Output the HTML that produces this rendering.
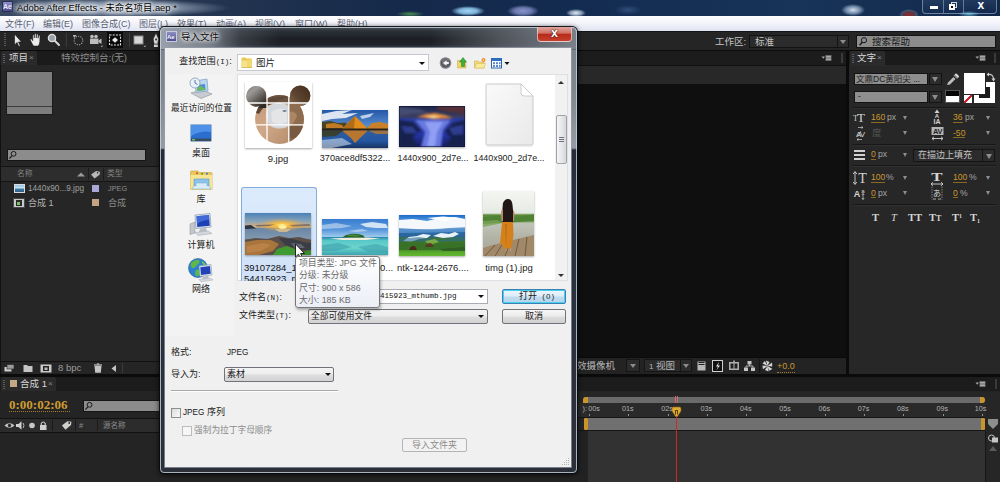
<!DOCTYPE html>
<html lang="zh-CN">
<head>
<meta charset="utf-8">
<title>Adobe After Effects - 导入文件</title>
<style>
html,body{margin:0;padding:0;}
body{width:1000px;height:482px;overflow:hidden;position:relative;background:#232323;
 font-family:"Liberation Sans","Noto Sans CJK SC",sans-serif;font-size:9px;color:#c0c0c0;}
.a{position:absolute;}
.t{position:absolute;white-space:nowrap;line-height:1;}
/* ---------- AE main window ---------- */
#titlebar{left:0;top:0;width:1000px;height:16px;background:
 radial-gradient(ellipse 17px 5px at 468px 11px,rgba(170,222,252,.95) 0,rgba(150,210,250,.8) 55%,rgba(120,190,245,0) 100%),
 radial-gradient(ellipse 16px 6px at 523px 11px,rgba(150,160,215,.9) 0,rgba(140,150,210,.7) 55%,rgba(110,130,200,0) 100%),
 radial-gradient(ellipse 10px 4px at 576px 13px,rgba(240,246,252,.95) 0,rgba(200,220,240,.6) 60%,rgba(150,190,235,0) 100%),
 radial-gradient(ellipse 14px 5px at 628px 10px,rgba(70,100,150,.6),rgba(70,100,150,0) 100%),
 radial-gradient(ellipse 12px 6px at 853px 10px,rgba(235,242,250,.9) 0,rgba(170,195,225,.6) 60%,rgba(120,150,190,0) 100%),
 radial-gradient(ellipse 10px 6px at 909px 15px,rgba(150,40,40,.95) 0,rgba(120,60,60,.7) 55%,rgba(120,130,150,.45) 75%,rgba(110,60,60,0) 100%),
 radial-gradient(ellipse 14px 3px at 410px 14px,rgba(90,170,80,.8),rgba(60,120,80,0) 100%),
 radial-gradient(ellipse 120px 9px at 110px 8px,rgba(225,232,242,.85) 0,rgba(190,205,225,.5) 60%,rgba(190,205,225,0) 100%),
 linear-gradient(90deg,#3a4a62 0,#22344f 22%,#15294a 40%,#142c52 60%,#183458 80%,#12284a 100%);}
#menubar{left:0;top:16px;width:1000px;height:15px;background:linear-gradient(180deg,#fefefe 0,#f4f5fb 45%,#e0e3f1 100%);}
#menubar .t{top:4px;font-size:9px;color:#586072;}
#toolbar{left:0;top:31px;width:1000px;height:19px;background:#252525;border-top:1px solid #151515;box-sizing:border-box;}
.blk{background:#0b0b0b;}

/* ---------- dialog ---------- */
#dlg{left:160px;top:27px;width:417px;height:446px;border-radius:5px 5px 4px 4px;
 background:
 linear-gradient(90deg,rgba(160,168,178,.95) 0,rgba(140,148,158,.8) 50px,rgba(90,98,108,.45) 80px,rgba(30,34,40,0) 120px,rgba(20,24,30,0) 270px,rgba(100,106,114,.7) 340px,rgba(128,134,142,.95) 100%) 0 0/100% 22px no-repeat,
 linear-gradient(180deg,#4a525c 0,#2c3138 4px,#1c1f25 12px,#202329 18px,#4a5058 22px,#7e848c 23px,#80868e 60px,#959ba3 121px,#252b38 123px,#2a3040 170px,#2b3038 100%);
 box-shadow:0 0 0 1px rgba(8,10,12,.9),0 1px 5px 1px rgba(0,0,0,.7);}
#dlg:before{content:"";position:absolute;left:0;top:0;right:0;bottom:0;border:1px solid rgba(200,212,224,.8);border-radius:5px 5px 4px 4px;}
#dbody{left:165px;top:48px;width:406px;height:419px;background:#f0f0f0;box-shadow:0 0 0 1px rgba(150,160,172,.7);}
.d{color:#1a1a1a;font-size:9.5px;}
.lbl{position:absolute;white-space:nowrap;line-height:1;font-size:9.5px;color:#222;text-align:center;}
.thumb{position:absolute;overflow:hidden;box-shadow:0 1px 2px rgba(0,0,0,.35);}
</style>
</head>
<body>
<!-- title bar -->
<div id="titlebar" class="a"></div>
<div class="a" style="left:2px;top:1px;width:11px;height:11px;background:linear-gradient(180deg,#8f90c8,#4c4d86);border:1px solid #2b2c5a;box-sizing:border-box;"></div>
<div class="t" style="left:3px;top:3px;font-size:7px;font-weight:bold;color:#e8e8ff;">Ae</div>
<div class="t" style="left:17px;top:3px;font-size:9.4px;color:#000;text-shadow:0 0 3px #fff,0 0 5px #fff,0 0 8px #fff,0 0 10px rgba(255,255,255,.9);">Adobe After Effects - 未命名项目.aep *</div>
<!-- window controls -->
<div class="a" style="left:922px;top:0;width:75px;height:14px;border:1px solid rgba(170,190,215,.55);border-top:none;border-radius:0 0 4px 4px;box-sizing:border-box;background:linear-gradient(180deg,rgba(60,90,130,.35),rgba(20,45,85,.25));"></div>
<div class="a" style="left:943px;top:0;width:1px;height:13px;background:rgba(170,190,215,.5);"></div>
<div class="a" style="left:963px;top:0;width:1px;height:13px;background:rgba(170,190,215,.5);"></div>
<div class="a" style="left:958px;top:11px;width:22px;height:5px;background:radial-gradient(ellipse 11px 3px at 50% 60%,rgba(130,220,250,.75),rgba(130,220,250,0));"></div>
<div class="a" style="left:930px;top:6px;width:8px;height:3px;background:#fff;"></div>
<div class="a" style="left:951px;top:2px;width:6px;height:6px;border:1.500px solid #d8d8d8;box-sizing:border-box;"></div>
<div class="a" style="left:949px;top:4px;width:6px;height:6px;border:2px solid #fff;box-sizing:border-box;background:#111;"></div>
<div class="t" style="left:977.500px;top:-1px;font-size:12px;font-weight:bold;color:#fff;">x</div>

<!-- menu bar -->
<div id="menubar" class="a">
 <div class="t" style="left:5px;">文件(F)</div>
 <div class="t" style="left:43px;">编辑(E)</div>
 <div class="t" style="left:82px;">图像合成(C)</div>
 <div class="t" style="left:139px;">图层(L)</div>
 <div class="t" style="left:177px;">效果(T)</div>
 <div class="t" style="left:216px;">动画(A)</div>
 <div class="t" style="left:255px;">视图(V)</div>
 <div class="t" style="left:295px;">窗口(W)</div>
 <div class="t" style="left:337px;">帮助(H)</div>
</div>

<!-- toolbar -->
<div id="toolbar" class="a"></div>


<!-- toolbar icons -->
<div class="a" style="left:4px;top:33px;width:2px;height:14px;background:repeating-linear-gradient(180deg,#555 0 1px,#252525 1px 2px);"></div>
<svg class="a" style="left:0;top:30px;" width="170" height="20" viewBox="0 0 170 20">
 <!-- arrow -->
 <path d="M14.5 4 L14.5 15 L17 12.5 L18.8 16.5 L20.3 15.8 L18.5 12 L21.5 12 Z" fill="#e6e6e6" stroke="#111" stroke-width=".6"/>
 <!-- hand -->
 <path d="M30 9.300 L31.300 8.800 L32.800 10.800 L32.800 5.300 Q33.500 4.400 34.200 5.300 L34.300 8 L34.600 4 Q35.400 3.100 36.100 4 L36.200 8 L36.700 4.300 Q37.500 3.500 38.100 4.400 L38 8.300 L38.700 5.600 Q39.500 5 40 5.900 L39.800 11.500 Q39.600 14 38.300 16 L33.600 16 Q31.500 13 30 9.300 Z" fill="#ececec" stroke="#161616" stroke-width=".5"/>
 <!-- zoom -->
 <circle cx="52" cy="8" r="3.6" fill="#9aa0a8" stroke="#e0e0e0" stroke-width="1.4"/>
 <path d="M54.8 10.8 L59 15" stroke="#d8d8d8" stroke-width="2" stroke-linecap="round"/>
 <!-- sep -->
 <rect x="66" y="3" width="1" height="14" fill="#3a3a3a"/>
 <!-- rotate -->
 <circle cx="78.500" cy="10.500" r="4.300" fill="none" stroke="#9a9a9a" stroke-width="1.100" stroke-dasharray="1.300 1.100"/>
 <path d="M73 5 L76.5 5 L74 8 Z" fill="#bdbdbd"/>
 <!-- camera -->
 <rect x="90" y="8.5" width="8.5" height="5.5" fill="#bdbdbd"/>
 <circle cx="92" cy="6.5" r="1.8" fill="#bdbdbd"/><circle cx="96" cy="6.5" r="1.8" fill="#bdbdbd"/>
 <path d="M98.5 10.5 L101.5 8.5 L101.5 14 L98.5 12 Z" fill="#bdbdbd"/>
 <path d="M100.5 17 L102.5 17 L102.5 15 Z" fill="#aaa"/>
 <!-- pan behind (selected) -->
 <rect x="107" y="2" width="16" height="16" fill="#0a0a0a"/>
 <rect x="109.5" y="5" width="11" height="10" fill="none" stroke="#e8e8e8" stroke-width="1.1" stroke-dasharray="2 1.2"/>
 <path d="M112 10 L115 7.2 L118 10 L115 12.8 Z" fill="#e8e8e8"/>
 <!-- sep -->
 <rect x="129" y="3" width="1" height="14" fill="#3a3a3a"/>
 <!-- rect -->
 <rect x="134" y="6" width="9" height="8" fill="#d6d6d6" stroke="#8a8a8a" stroke-width="1"/>
 <path d="M143.5 17 L145.5 17 L145.5 15 Z" fill="#aaa"/>
 <!-- pen -->
 <path d="M156 3 L158.8 9 L157.8 14 L154.2 14 L153.2 9 Z" fill="#e6e6e6" stroke="#111" stroke-width=".5"/>
 <rect x="154" y="14.5" width="4" height="2.5" fill="#e0e0e0"/>
 <circle cx="156" cy="9.5" r=".9" fill="#222"/>
</svg>
<div class="a blk" style="left:0;top:50px;width:1000px;height:1px;"></div>


<!-- workspace + search help -->
<div class="t" style="left:715px;top:37px;font-size:9.500px;color:#c4c4c4;">工作区:</div>
<div class="a" style="left:749px;top:35px;width:100px;height:13px;background:#2b2b2b;border:1px solid #131313;box-sizing:border-box;"></div>
<div class="a" style="left:837px;top:36px;width:1px;height:11px;background:#131313;"></div>
<div class="t" style="left:755px;top:37px;font-size:9.500px;color:#c4c4c4;">标准</div>
<div class="a" style="left:840px;top:40px;width:0;height:0;border-left:3px solid transparent;border-right:3px solid transparent;border-top:4px solid #8c8c8c;"></div>
<div class="a" style="left:856px;top:35px;width:140px;height:13px;background:#8c8c8c;border:1px solid #131313;box-sizing:border-box;"></div>
<svg class="a" style="left:858px;top:36px;" width="12" height="11" viewBox="0 0 12 11"><circle cx="6" cy="4.200" r="2.600" fill="none" stroke="#161616" stroke-width="1"/><path d="M4.200 6.200 L1.600 9.200" stroke="#161616" stroke-width="1.300"/></svg>
<div class="t" style="left:872px;top:37px;font-size:9.500px;color:#161616;">搜索帮助</div>

<!-- ===== project panel (left) ===== -->
<div class="a" style="left:0;top:51px;width:163px;height:14px;background:#1b1b1b;"></div>
<div class="a" style="left:1px;top:51px;width:36px;height:15px;background:#2a2a2a;border-radius:2px 2px 0 0;"></div>
<div class="a" style="left:3px;top:54px;width:2px;height:9px;background:repeating-linear-gradient(180deg,#5a5a5a 0 1px,#2a2a2a 1px 2px);"></div>
<div class="t" style="left:9px;top:53px;font-size:9.5px;color:#d6d6d6;">项目</div>
<div class="t" style="left:29px;top:54px;font-size:8px;color:#8a8a8a;">×</div>
<div class="t" style="left:61px;top:53px;font-size:9.5px;color:#8c8c8c;">特效控制台:(无)</div>
<div class="a" style="left:0;top:65px;width:163px;height:296px;background:#262626;"></div>
<div class="a" style="left:0;top:65px;width:1px;height:310px;background:#111;"></div>
<!-- thumbnail -->
<div class="a" style="left:6px;top:71px;width:47px;height:44px;background:#7d7d7d;border:1px solid #1a1a1a;box-sizing:border-box;"></div>
<div class="a" style="left:7px;top:106px;width:45px;height:1px;background:#3c3c3c;"></div>
<!-- search -->
<div class="a" style="left:7px;top:149px;width:139px;height:12px;background:#8c8c8c;border:1px solid #161616;box-sizing:border-box;"></div>
<svg class="a" style="left:8px;top:150px;" width="12" height="10" viewBox="0 0 12 10"><circle cx="5.6" cy="3.8" r="2.4" fill="none" stroke="#1a1a1a" stroke-width="1"/><path d="M3.8 5.8 L1.4 8.6" stroke="#1a1a1a" stroke-width="1.2"/></svg>
<!-- header -->
<div class="a" style="left:1px;top:166px;width:162px;height:1px;background:#141414;"></div>
<div class="a" style="left:1px;top:167px;width:162px;height:14px;background:#2d2d2d;"></div>
<div class="a" style="left:1px;top:181px;width:162px;height:1px;background:#141414;"></div>
<div class="t" style="left:17px;top:170px;font-size:7.800px;color:#828282;">名称</div>
<svg class="a" style="left:76px;top:170px;" width="30" height="10" viewBox="0 0 30 10"><path d="M1 6.5 L5 2.5 L9 6.5 Z" fill="#9a9a9a"/><path d="M15 5 L19.5 1 L23.5 1 L23.5 4 L19 8.5 Z" fill="#b8b8b8" transform="rotate(8 19 5)"/><circle cx="21.6" cy="2.8" r=".8" fill="#2d2d2d"/></svg>
<div class="t" style="left:107px;top:170px;font-size:7.800px;color:#828282;">类型</div><div class="a" style="left:88px;top:168px;width:1px;height:12px;background:#1c1c1c;"></div><div class="a" style="left:103px;top:168px;width:1px;height:12px;background:#1c1c1c;"></div>
<!-- rows -->
<div class="a" style="left:14px;top:184px;width:11px;height:9px;background:linear-gradient(180deg,#8fc3e6 0,#cfe6f4 45%,#3f7fa8 55%,#2d5f86 100%);border:1px solid #dcdcdc;box-sizing:border-box;"></div>
<div class="t" style="left:28px;top:185px;font-size:8.200px;color:#a0a0a0;">1440x90...9.jpg</div>
<div class="a" style="left:92px;top:185px;width:7px;height:7px;background:#aaa8d8;"></div>
<div class="t" style="left:108px;top:185px;font-size:7.300px;color:#8e8e8e;">JPEG</div>
<div class="a" style="left:13px;top:198px;width:12px;height:10px;background:#c9c9c9;border:1px solid #4a4a4a;box-sizing:border-box;"></div>
<div class="a" style="left:16px;top:200px;width:6px;height:6px;background:#2a2a2a;"></div>
<div class="a" style="left:17px;top:202px;width:3px;height:3px;background:#7cc06a;"></div>
<div class="t" style="left:28px;top:198.500px;font-size:9px;color:#b2b2b2;">合成 1</div>
<div class="a" style="left:92px;top:199px;width:7px;height:7px;background:#c4a484;"></div>
<div class="t" style="left:108px;top:198.500px;font-size:9px;color:#8a8a8a;">合成</div>
<!-- bottom bar -->
<div class="a" style="left:0;top:361px;width:163px;height:1px;background:#111;"></div>
<div class="a" style="left:1px;top:362px;width:162px;height:12px;background:#252525;"></div>
<svg class="a" style="left:0;top:362px;" width="130" height="12" viewBox="0 0 130 12">
 <rect x="4.5" y="5" width="7" height="4.5" fill="#cfcfcf"/><rect x="7" y="2.5" width="7" height="4.5" fill="#9a9a9a" stroke="#252525" stroke-width=".6"/>
 <path d="M23.5 3 L27 3 L28 4 L32.5 4 L32.5 10 L23.5 10 Z" fill="#c4c4c4"/>
 <rect x="40.5" y="2.5" width="11" height="8" fill="#c9c9c9"/><rect x="43" y="4" width="6" height="5" fill="#252525"/><rect x="44.5" y="5.5" width="3" height="2.5" fill="#bdbdbd"/>
 <path d="M94.5 4 L101.5 4 L100.8 10.8 L95.2 10.8 Z" fill="#c4c4c4"/><rect x="94" y="2.4" width="8" height="1.2" fill="#c4c4c4"/><rect x="96.8" y="1.4" width="2.4" height="1.2" fill="#c4c4c4"/>
 <path d="M116 3 L116 10 L111.5 6.5 Z" fill="#c4c4c4"/>
 <rect x="122" y="1" width="1" height="10" fill="#3a3a3a"/>
</svg>
<div class="t" style="left:58px;top:363px;font-size:9.5px;color:#9c9c9c;">8 bpc</div>
<div class="a blk" style="left:0;top:374px;width:1000px;height:3px;"></div>


<!-- ===== timeline (left) ===== -->
<div class="a" style="left:0;top:377px;width:1000px;height:14px;background:#1c1c1c;"></div>
<div class="a" style="left:1px;top:377px;width:55px;height:15px;background:#2a2a2a;border-radius:2px 2px 0 0;"></div>
<div class="a" style="left:3px;top:380px;width:2px;height:9px;background:repeating-linear-gradient(180deg,#5a5a5a 0 1px,#2a2a2a 1px 2px);"></div>
<div class="a" style="left:10px;top:380px;width:7px;height:7px;background:#c4a987;"></div>
<div class="t" style="left:20px;top:379px;font-size:9.5px;color:#d6d6d6;">合成 1</div>
<div class="t" style="left:48px;top:380px;font-size:8px;color:#8a8a8a;">×</div>
<div class="a" style="left:0;top:391px;width:1000px;height:91px;background:#242424;"></div>
<div class="t" style="left:9px;top:398px;font-size:13px;font-weight:bold;color:#cf9c30;letter-spacing:0;font-family:'Liberation Serif','Noto Serif CJK SC',serif;">0:00:02:06</div>
<div class="a" style="left:9px;top:411px;width:61px;height:0;border-top:1px dotted #a57c26;"></div>
<div class="a" style="left:83px;top:400px;width:80px;height:12px;background:#8c8c8c;border:1px solid #161616;box-sizing:border-box;"></div>
<svg class="a" style="left:84px;top:401px;" width="12" height="10" viewBox="0 0 12 10"><circle cx="5.6" cy="3.8" r="2.4" fill="none" stroke="#1a1a1a" stroke-width="1"/><path d="M3.8 5.8 L1.4 8.6" stroke="#1a1a1a" stroke-width="1.2"/></svg>
<div class="a" style="left:0;top:418px;width:163px;height:1px;background:#121212;"></div>
<div class="a" style="left:0;top:419px;width:163px;height:13px;background:#2c2c2c;"></div>
<div class="a" style="left:0;top:432px;width:163px;height:1px;background:#121212;"></div>
<svg class="a" style="left:0;top:419px;" width="140" height="13" viewBox="0 0 140 13">
 <path d="M4.5 6.5 Q9.5 2 14.5 6.5 Q9.5 11 4.5 6.5 Z" fill="#c8c8c8"/><circle cx="9.5" cy="6.5" r="1.7" fill="#2c2c2c"/>
 <path d="M16 5 L18.5 5 L21.5 2.2 L21.5 10.8 L18.5 8 L16 8 Z" fill="#d0d0d0"/><path d="M23 4 Q25 6.5 23 9" fill="none" stroke="#c8c8c8" stroke-width=".9"/>
 <circle cx="32" cy="6.5" r="2.8" fill="#c8c8c8"/>
 <rect x="40" y="6" width="6.5" height="5" fill="#d0d0d0"/><path d="M41.3 6 L41.3 4.3 Q43.2 1.6 45.2 4.3 L45.2 6" fill="none" stroke="#d0d0d0" stroke-width="1.1"/>
 <rect x="52" y="1" width="1" height="11" fill="#1a1a1a"/>
 <path d="M62 7 L67 2.2 L71 2.2 L71 5.6 L66 10.8 Z" fill="#cfcfcf" transform="rotate(6 66 6)"/><circle cx="69.2" cy="4" r=".9" fill="#2c2c2c"/>
 <rect x="75" y="1" width="1" height="11" fill="#1a1a1a"/>
 <rect x="97" y="1" width="1" height="11" fill="#1a1a1a"/>
</svg>
<div class="t" style="left:79px;top:422px;font-size:7.5px;color:#8c8c8c;">#</div>
<div class="t" style="left:103px;top:422px;font-size:7.5px;color:#8c8c8c;">源名称</div>


<!-- ===== comp panel (center) ===== -->
<div class="a" style="left:163px;top:51px;width:683px;height:14px;background:#1c1c1c;"></div>
<div class="a" style="left:163px;top:65px;width:683px;height:1px;background:#101010;"></div>
<div class="a" style="left:163px;top:66px;width:683px;height:18px;background:#282828;"></div>
<div class="a" style="left:163px;top:84px;width:683px;height:273px;background:#0f0f0f;"></div>
<div class="a" style="left:163px;top:357px;width:683px;height:1px;background:#0a0a0a;"></div>
<div class="a" style="left:163px;top:358px;width:683px;height:16px;background:#232323;"></div>
<div class="a blk" style="left:846px;top:51px;width:3px;height:326px;"></div>
<svg class="a" style="left:818px;top:53px;" width="28" height="10" viewBox="0 0 28 10"><path d="M3.5 3.5 L7 3.5 L5.25 5.8 Z" fill="#a8a8a8"/><rect x="7.5" y="2" width="6" height="6" fill="#6a6a6a"/><path d="M8 3.5h5M8 5h5M8 6.5h5" stroke="#b8b8b8" stroke-width=".8"/><rect x="23" y="0" width="2" height="10" fill="#3a3a3a"/></svg>
<!-- comp bottom controls -->
<div class="t" style="left:577px;top:361px;font-size:9.5px;color:#b8b8b8;">效摄像机</div>
<div class="a" style="left:626px;top:359px;width:14px;height:13px;border:1px solid #151515;box-sizing:border-box;background:#2b2b2b;"></div>
<div class="a" style="left:630px;top:364px;width:0;height:0;border:3px solid transparent;border-top:4px solid #8a8a8a;"></div>
<div class="a" style="left:644px;top:359px;width:48px;height:13px;border:1px solid #151515;box-sizing:border-box;background:#2b2b2b;"></div>
<div class="a" style="left:680px;top:359px;width:1px;height:13px;background:#151515;"></div>
<div class="t" style="left:649px;top:361px;font-size:9.5px;color:#b8b8b8;"><span style="font-size:8px;">1</span> 视图</div>
<div class="a" style="left:683px;top:364px;width:0;height:0;border:3px solid transparent;border-top:4px solid #8a8a8a;"></div>
<svg class="a" style="left:694px;top:358px;" width="110" height="16" viewBox="0 0 110 16">
 <rect x="3.5" y="3.5" width="8" height="9" fill="#b8b8b8"/><rect x="4.5" y="6" width="6" height="1" fill="#232323"/><rect x="4.500" y="4" width="6" height="1" fill="#232323"/>
 <rect x="18.500" y="2.500" width="10" height="11" fill="#111" stroke="#cfcfcf" stroke-width="1"/><path d="M25 4 L22 8.500 L24 8.500 L22.500 12 L26 7.500 L24 7.500 Z" fill="#e8e8e8"/>
 <rect x="35" y="4" width="10" height="8" fill="#b0b0b0"/><rect x="36.500" y="5.500" width="3" height="5" fill="#232323"/><rect x="40.500" y="5.500" width="3" height="5" fill="#232323"/><rect x="39.200" y="2.500" width="1.600" height="2" fill="#b0b0b0"/>
 <rect x="53.500" y="3" width="4" height="3.500" fill="#c4c4c4"/><rect x="50" y="9.500" width="4" height="3.500" fill="#c4c4c4"/><rect x="57" y="9.500" width="4" height="3.500" fill="#c4c4c4"/><path d="M55.500 6.500v1.500M52 9.500v-1.500h7v1.500" stroke="#c4c4c4" stroke-width=".9" fill="none"/>
 <rect x="65" y="1" width="1" height="14" fill="#151515"/>
 <g transform="translate(73.500 8)" fill="#d4d4d4"><path d="M0 0 L-1.500 -5.500 L2 -4 Z"/><path d="M0 0 L4.500 -3.500 L4.800 .5 Z"/><path d="M0 0 L5 3 L1.500 4.800 Z"/><path d="M0 0 L1 5.500 L-2.600 4 Z"/><path d="M0 0 L-4.600 3.200 L-5 -.6 Z"/><path d="M0 0 L-5 -2.600 L-2.600 -5 Z"/></g>
</svg>
<div class="t" style="left:777px;top:362px;font-size:9px;color:#c9982f;border-bottom:1px dotted #a57c26;padding-bottom:1px;">+0.0</div>

<!-- ===== timeline (right) ===== -->
<svg class="a" style="left:972px;top:379px;" width="28" height="10" viewBox="0 0 28 10"><path d="M3.500 3.500 L7 3.500 L5.250 5.800 Z" fill="#a8a8a8"/><rect x="7.500" y="2" width="6" height="6" fill="#6a6a6a"/><path d="M8 3.500h5M8 5h5M8 6.500h5" stroke="#b8b8b8" stroke-width=".8"/><rect x="23" y="0" width="2" height="10" fill="#3a3a3a"/></svg>
<div class="a" style="left:577px;top:392px;width:423px;height:90px;background:#262626;"></div>
<div class="a" style="left:583px;top:397px;width:402px;height:6px;background:#6b6b6b;border-radius:3px;"></div>
<div class="a" style="left:583px;top:397px;width:5px;height:6px;background:#c9962e;border-radius:3px 0 0 0;"></div>
<div class="a" style="left:980px;top:397px;width:5px;height:6px;background:#c9962e;border-radius:0 3px 3px 0;"></div>
<div class="a" style="left:577px;top:403px;width:408px;height:14px;background:#2a2a2a;"></div>
<div class="t" style="left:582.500px;top:405px;font-size:7.200px;color:#b4b4b4;">):</div>
<div class="a" style="left:589.0px;top:414px;width:1px;height:2px;background:#909090;"></div><div class="t" style="left:588.300px;top:405px;font-size:7.200px;color:#b4b4b4;">00s</div>
<div class="a" style="left:628.3px;top:414px;width:1px;height:2px;background:#909090;"></div><div class="t" style="left:622.0px;top:405px;font-size:7.200px;color:#b4b4b4;">01s</div>
<div class="a" style="left:667.6px;top:414px;width:1px;height:2px;background:#909090;"></div><div class="t" style="left:661.3px;top:405px;font-size:7.200px;color:#b4b4b4;">02s</div>
<div class="a" style="left:706.9px;top:414px;width:1px;height:2px;background:#909090;"></div><div class="t" style="left:700.6px;top:405px;font-size:7.200px;color:#b4b4b4;">03s</div>
<div class="a" style="left:746.2px;top:414px;width:1px;height:2px;background:#909090;"></div><div class="t" style="left:739.9px;top:405px;font-size:7.200px;color:#b4b4b4;">04s</div>
<div class="a" style="left:785.5px;top:414px;width:1px;height:2px;background:#909090;"></div><div class="t" style="left:779.2px;top:405px;font-size:7.200px;color:#b4b4b4;">05s</div>
<div class="a" style="left:824.8px;top:414px;width:1px;height:2px;background:#909090;"></div><div class="t" style="left:818.5px;top:405px;font-size:7.200px;color:#b4b4b4;">06s</div>
<div class="a" style="left:864.1px;top:414px;width:1px;height:2px;background:#909090;"></div><div class="t" style="left:857.8px;top:405px;font-size:7.200px;color:#b4b4b4;">07s</div>
<div class="a" style="left:903.4px;top:414px;width:1px;height:2px;background:#909090;"></div><div class="t" style="left:897.1px;top:405px;font-size:7.200px;color:#b4b4b4;">08s</div>
<div class="a" style="left:942.7px;top:414px;width:1px;height:2px;background:#909090;"></div><div class="t" style="left:936.4px;top:405px;font-size:7.200px;color:#b4b4b4;">09s</div>
<div class="a" style="left:982.0px;top:414px;width:1px;height:2px;background:#909090;"></div><div class="t" style="left:974.800px;top:405px;font-size:7.200px;color:#b4b4b4;">10s</div>

<div class="a" style="left:577px;top:417px;width:408px;height:1px;background:#161616;"></div>
<div class="a" style="left:588px;top:418px;width:396px;height:12px;background:#707070;"></div>
<div class="a" style="left:584px;top:418px;width:4px;height:12px;background:#c9962e;border-radius:1px;"></div>
<div class="a" style="left:981px;top:418px;width:4px;height:12px;background:#c9962e;border-radius:1px;"></div>
<div class="a" style="left:577px;top:430px;width:408px;height:1px;background:#161616;"></div>
<div class="a" style="left:588px;top:431px;width:397px;height:51px;background:#323232;"></div>
<div class="a" style="left:577px;top:431px;width:11px;height:51px;background:#222;"></div>
<div class="a" style="left:987px;top:392px;width:13px;height:90px;background:#262626;"></div>
<div class="a" style="left:985px;top:431px;width:1px;height:51px;background:#161616;"></div>
<!-- playhead -->
<div class="a" style="left:675px;top:396px;width:1px;height:7px;background:#d66;"></div>
<div class="a" style="left:677px;top:396px;width:1px;height:7px;background:#d66;"></div>
<div class="a" style="left:676px;top:410px;width:1px;height:72px;background:#d6232a;"></div>
<svg class="a" style="left:671px;top:406px;" width="11" height="12" viewBox="0 0 11 12"><path d="M1 2.500 Q1 1 2.500 1 L8.500 1 Q10 1 10 2.500 L10 5 L6.500 10.500 L4.500 10.500 L1 5 Z" fill="#e0a92f" stroke="#8a6518" stroke-width=".6"/><path d="M4 4h3v4.500h-1v-3.500h-1v3.500h-1z" fill="#5a4210"/></svg>
<!-- right column icons -->
<svg class="a" style="left:986px;top:418px;" width="14" height="40" viewBox="0 0 14 40"><path d="M2 1 L12 1 L12 6 L7 11 L2 6 Z" fill="#8e8e8e"/><circle cx="5.500" cy="20" r="3" fill="none" stroke="#c4c4c4" stroke-width="1"/><rect x="6" y="19.500" width="6" height="5" fill="#c4c4c4"/><path d="M3 33 L7 28 L11 33 Z" fill="#5a5a5a"/></svg>


<!-- ===== character panel (right) ===== -->
<div class="a" style="left:849px;top:51px;width:151px;height:14px;background:#1b1b1b;"></div>
<div class="a" style="left:849px;top:65px;width:151px;height:309px;background:#272727;"></div>
<div class="a" style="left:850px;top:51px;width:35px;height:15px;background:#2b2b2b;border-radius:2px 2px 0 0;"></div>
<div class="a" style="left:852px;top:54px;width:2px;height:9px;background:repeating-linear-gradient(180deg,#5a5a5a 0 1px,#2b2b2b 1px 2px);"></div>
<div class="t" style="left:857px;top:53px;font-size:9.5px;color:#d6d6d6;">文字</div>
<div class="t" style="left:877px;top:54px;font-size:8px;color:#8a8a8a;">×</div>
<svg class="a" style="left:972px;top:53px;" width="28" height="10" viewBox="0 0 28 10"><path d="M3.5 3.5 L7 3.5 L5.25 5.8 Z" fill="#a8a8a8"/><rect x="7.5" y="2" width="6" height="6" fill="#6a6a6a"/><path d="M8 3.5h5M8 5h5M8 6.500h5" stroke="#b8b8b8" stroke-width=".8"/><rect x="22" y="0" width="2" height="10" fill="#3a3a3a"/></svg>
<!-- font combos -->
<div class="a" style="left:854px;top:73px;width:74px;height:12px;background:#8e8e8e;border:1px solid #141414;box-sizing:border-box;"></div>
<div class="t" style="left:856px;top:75px;font-size:8.500px;color:#1c1c1c;">文鼎DC黄阳尖 ...</div>
<div class="a" style="left:929px;top:73px;width:13px;height:12px;background:#2c2c2c;border:1px solid #141414;box-sizing:border-box;"></div>
<div class="a" style="left:932px;top:77px;width:0;height:0;border-left:3px solid transparent;border-right:3px solid transparent;border-top:5px solid #8c8c8c;"></div>
<div class="a" style="left:854px;top:91px;width:74px;height:12px;background:#8e8e8e;border:1px solid #141414;box-sizing:border-box;"></div>
<div class="t" style="left:858px;top:92px;font-size:8.500px;color:#1c1c1c;">-</div>
<div class="a" style="left:929px;top:91px;width:13px;height:12px;background:#2c2c2c;border:1px solid #141414;box-sizing:border-box;"></div>
<div class="a" style="left:932px;top:95px;width:0;height:0;border-left:3px solid transparent;border-right:3px solid transparent;border-top:5px solid #8c8c8c;"></div>
<!-- eyedropper -->
<svg class="a" style="left:945px;top:73px;" width="16" height="14" viewBox="0 0 16 14"><path d="M2 12 L3 9.500 L8.500 4 L10.500 6 L5 11.500 Z" fill="#bdbdbd"/><path d="M8.500 2.500 L12 6 L13.500 4.500 L10 1 Z" fill="#8a8a8a"/><path d="M11 1.500 L13 3.500" stroke="#d8d8d8" stroke-width="2" stroke-linecap="round"/></svg>
<!-- swatches -->
<div class="a" style="left:945px;top:90px;width:15px;height:13px;background:linear-gradient(180deg,#050505 0 45%,#fff 45% 100%);border:1px solid #555;box-sizing:border-box;"></div>
<div class="a" style="left:964px;top:95px;width:8px;height:8px;background:linear-gradient(135deg,#fff 0 40%,#d0202a 40% 60%,#fff 60% 100%);"></div>
<div class="a" style="left:974px;top:82px;width:21px;height:21px;background:#fff;"></div>
<div class="a" style="left:979px;top:87px;width:11px;height:11px;background:#1a1a1a;"></div>
<div class="a" style="left:964px;top:73px;width:21px;height:21px;background:#fff;box-shadow:1px 1px 0 #222;"></div>
<svg class="a" style="left:986px;top:72px;" width="10" height="10" viewBox="0 0 10 10"><path d="M2 2.500 Q7 1.500 7.500 7" fill="none" stroke="#d0d0d0" stroke-width="1.200"/><path d="M.5 2.500 L3 .5 L3 4.500 Z" fill="#d0d0d0"/><path d="M5.500 6.500 L9.500 6.500 L7.500 9.500 Z" fill="#d0d0d0"/></svg>
<div class="a" style="left:853px;top:107px;width:143px;height:1px;background:#171717;"></div>
<div class="a" style="left:853px;top:108px;width:143px;height:1px;background:#303030;"></div>
<!-- row 1 -->
<div class="t" style="left:853px;top:115px;font-size:8px;color:#d4d4d4;font-family:'Liberation Serif',serif;">T</div>
<div class="t" style="left:857px;top:111px;font-size:13px;color:#d4d4d4;font-family:'Liberation Serif',serif;">T</div>
<div class="t" style="left:871px;top:113px;font-size:8.600px;color:#c9982f;border-bottom:1px solid #8a6a22;padding-bottom:0;">160</div><div class="t" style="left:887px;top:113px;font-size:8.600px;color:#a4a4a4;">px</div><div class="a" style="left:903px;top:116px;width:0;height:0;border-left:2.500px solid transparent;border-right:2.500px solid transparent;border-top:4px solid #8e8e8e;"></div>
<svg class="a" style="left:930px;top:109px;" width="14" height="15" viewBox="0 0 14 15"><path d="M7 .5 L9.500 4 L4.500 4 Z" fill="#cfcfcf"/><text x="7" y="8.500" font-size="6" font-weight="bold" fill="#d4d4d4" text-anchor="middle" font-family="Liberation Sans,sans-serif">A</text><text x="7" y="14.500" font-size="7" font-weight="bold" fill="#d4d4d4" text-anchor="middle" font-family="Liberation Sans,sans-serif">IA</text></svg>
<div class="t" style="left:953px;top:113px;font-size:8.600px;color:#c9982f;border-bottom:1px solid #8a6a22;padding-bottom:0;">36</div><div class="t" style="left:965px;top:113px;font-size:8.600px;color:#a4a4a4;">px</div><div class="a" style="left:986px;top:116px;width:0;height:0;border-left:2.500px solid transparent;border-right:2.500px solid transparent;border-top:4px solid #8e8e8e;"></div>
<!-- row 2 -->
<svg class="a" style="left:852px;top:126px;" width="16" height="15" viewBox="0 0 16 15"><text x="8" y="10.500" font-size="8" fill="#d4d4d4" text-anchor="middle" font-family="Liberation Sans,sans-serif" letter-spacing="-1">AV</text><path d="M6 1.500h5M9.500 .3l1.500 1.200-1.500 1.200M5 13.500h5M6.500 12.300l-1.500 1.200 1.500 1.200" stroke="#cfcfcf" stroke-width=".7" fill="none"/><path d="M9 5 L5.500 11" stroke="#d4d4d4" stroke-width=".6"/></svg>
<div class="t" style="left:872px;top:128px;font-size:9.500px;color:#555;">度</div>
<div class="a" style="left:903px;top:131px;width:0;height:0;border-left:2.500px solid transparent;border-right:2.500px solid transparent;border-top:4px solid #8e8e8e;"></div>
<svg class="a" style="left:930px;top:126px;" width="15" height="16" viewBox="0 0 15 16"><rect x="1.500" y="1" width="12" height="8" fill="#b4b4b4"/><text x="7.500" y="7.800" font-size="7.500" font-weight="bold" fill="#222" text-anchor="middle" font-family="Liberation Sans,sans-serif" letter-spacing="-.5">AV</text><path d="M2 12.500h11M4 10.800l-2 1.700 2 1.700M11 10.800l2 1.700-2 1.700" stroke="#d4d4d4" stroke-width=".9" fill="none"/></svg>
<div class="t" style="left:953px;top:128.500px;font-size:8.600px;color:#c9982f;border-bottom:1px solid #8a6a22;padding-bottom:0;">-50</div><div class="t" style="left:970px;top:128.500px;font-size:8.600px;color:#a4a4a4;"></div><div class="a" style="left:986px;top:131px;width:0;height:0;border-left:2.500px solid transparent;border-right:2.500px solid transparent;border-top:4px solid #8e8e8e;"></div>
<div class="a" style="left:853px;top:144px;width:143px;height:1px;background:#171717;"></div>
<div class="a" style="left:853px;top:145px;width:143px;height:1px;background:#303030;"></div>
<!-- row 3 -->
<div class="a" style="left:854px;top:150px;width:11px;height:2px;background:#d0d0d0;box-shadow:0 4px 0 #d0d0d0,0 8px 0 #d0d0d0;"></div>
<div class="t" style="left:871px;top:150px;font-size:8.600px;color:#c9982f;border-bottom:1px solid #8a6a22;padding-bottom:0;">0</div><div class="t" style="left:878px;top:150px;font-size:8.600px;color:#a4a4a4;">px</div><div class="a" style="left:903px;top:153px;width:0;height:0;border-left:2.500px solid transparent;border-right:2.500px solid transparent;border-top:4px solid #8e8e8e;"></div>
<div class="a" style="left:913px;top:149px;width:82px;height:13px;background:#2c2c2c;border:1px solid #141414;box-sizing:border-box;"></div>
<div class="a" style="left:982px;top:150px;width:1px;height:11px;background:#141414;"></div>
<div class="t" style="left:918px;top:151px;font-size:9px;color:#c4c4c4;">在描边上填充</div>
<div class="a" style="left:986px;top:154px;width:0;height:0;border-left:3px solid transparent;border-right:3px solid transparent;border-top:5px solid #8c8c8c;"></div>
<div class="a" style="left:853px;top:165px;width:143px;height:1px;background:#171717;"></div>
<div class="a" style="left:853px;top:166px;width:143px;height:1px;background:#303030;"></div>
<!-- row 4 -->
<svg class="a" style="left:852px;top:170px;" width="16" height="16" viewBox="0 0 16 16"><path d="M3 2v12M1.200 4 L3 1.500 L4.800 4M1.200 12 L3 14.500 L4.800 12" stroke="#d4d4d4" stroke-width=".9" fill="none"/><text x="10.500" y="13" font-size="14" fill="#d4d4d4" text-anchor="middle" font-family="Liberation Serif,serif">T</text></svg>
<div class="t" style="left:871px;top:173px;font-size:8.600px;color:#c9982f;border-bottom:1px solid #8a6a22;padding-bottom:0;">100</div><div class="t" style="left:886px;top:173px;font-size:8.600px;color:#a4a4a4;">%</div><div class="a" style="left:903px;top:176px;width:0;height:0;border-left:2.500px solid transparent;border-right:2.500px solid transparent;border-top:4px solid #8e8e8e;"></div>
<svg class="a" style="left:929px;top:170px;" width="16" height="17" viewBox="0 0 16 17"><text x="8" y="10.500" font-size="13" font-weight="bold" fill="#d4d4d4" text-anchor="middle" font-family="Liberation Serif,serif" transform="translate(-2.400 0) scale(1.300 1)">T</text><path d="M2 14h12M4 12.300l-2 1.700 2 1.700M12 12.300l2 1.700-2 1.700" stroke="#d4d4d4" stroke-width=".9" fill="none"/></svg>
<div class="t" style="left:953px;top:173px;font-size:8.600px;color:#c9982f;border-bottom:1px solid #8a6a22;padding-bottom:0;">100</div><div class="t" style="left:969px;top:173px;font-size:8.600px;color:#a4a4a4;">%</div><div class="a" style="left:986px;top:176px;width:0;height:0;border-left:2.500px solid transparent;border-right:2.500px solid transparent;border-top:4px solid #8e8e8e;"></div>
<!-- row 5 -->
<svg class="a" style="left:852px;top:185px;" width="16" height="16" viewBox="0 0 16 16"><text x="5" y="12" font-size="9" font-weight="bold" fill="#d4d4d4" text-anchor="middle" font-family="Liberation Sans,sans-serif">A</text><text x="11" y="7.500" font-size="6" fill="#d4d4d4" text-anchor="middle" font-family="Liberation Sans,sans-serif">a</text><path d="M11 8.500v6M9.800 10l1.200-1.500 1.200 1.500M9.800 13l1.200 1.500 1.200-1.500" stroke="#cfcfcf" stroke-width=".7" fill="none"/></svg>
<div class="t" style="left:871px;top:188.500px;font-size:8.600px;color:#c9982f;border-bottom:1px solid #8a6a22;padding-bottom:0;">0</div><div class="t" style="left:878px;top:188.500px;font-size:8.600px;color:#a4a4a4;">px</div><div class="a" style="left:903px;top:191px;width:0;height:0;border-left:2.500px solid transparent;border-right:2.500px solid transparent;border-top:4px solid #8e8e8e;"></div>
<svg class="a" style="left:929px;top:185px;" width="16" height="16" viewBox="0 0 16 16"><path d="M3 1.500v13M13 1.500v13" stroke="#9a9a9a" stroke-width=".8" stroke-dasharray="1.500 1"/><text x="8" y="10.500" font-size="8" fill="#d4d4d4" text-anchor="middle" font-family="Noto Sans CJK SC,sans-serif">あ</text><path d="M4 14h3M9 14h3" stroke="#cfcfcf" stroke-width=".8"/></svg>
<div class="t" style="left:953px;top:188.500px;font-size:8.600px;color:#c9982f;border-bottom:1px solid #8a6a22;padding-bottom:0;">0</div><div class="t" style="left:960px;top:188.500px;font-size:8.600px;color:#a4a4a4;">%</div><div class="a" style="left:986px;top:191px;width:0;height:0;border-left:2.500px solid transparent;border-right:2.500px solid transparent;border-top:4px solid #8e8e8e;"></div>
<div class="a" style="left:853px;top:204px;width:143px;height:1px;background:#171717;"></div>
<div class="a" style="left:853px;top:205px;width:143px;height:1px;background:#303030;"></div>
<!-- T row -->
<div class="t" style="left:872px;top:212.500px;font-size:10.500px;font-weight:bold;color:#d8d8d8;font-family:'Liberation Serif',serif;">T</div>
<div class="t" style="left:891px;top:212.500px;font-size:10.500px;font-style:italic;color:#d8d8d8;font-family:'Liberation Serif',serif;">T</div>
<div class="t" style="left:908px;top:212.500px;font-size:10.500px;font-weight:bold;color:#d8d8d8;font-family:'Liberation Serif',serif;">TT</div>
<div class="t" style="left:929px;top:212.500px;font-size:10.500px;font-weight:bold;color:#d8d8d8;font-family:'Liberation Serif',serif;">T<span style="font-size:8px;">T</span></div>
<div class="t" style="left:952px;top:212.500px;font-size:10.500px;font-weight:bold;color:#d8d8d8;font-family:'Liberation Serif',serif;">T<span style="font-size:6px;vertical-align:top;">1</span></div>
<div class="t" style="left:970px;top:212.500px;font-size:10.500px;font-weight:bold;color:#d8d8d8;font-family:'Liberation Serif',serif;">T<span style="font-size:6px;position:relative;top:2px;">1</span></div>


<!-- ===== Import dialog ===== -->
<div id="dlg" class="a"></div>
<div class="a" style="left:166px;top:31px;width:11px;height:11px;background:linear-gradient(180deg,#8d8fc4,#4d4e88);border:1px solid #c9c9e6;box-sizing:border-box;"></div>
<div class="t" style="left:167px;top:34px;font-size:6px;font-weight:bold;color:#f0f0ff;">Ae</div>
<div class="t" style="left:181px;top:32px;font-size:9.5px;color:#0b0b0b;text-shadow:0 0 3px #fff,0 0 5px #fff,0 0 7px rgba(255,255,255,.8);">导入文件</div>
<!-- close button -->
<div class="a" style="left:537px;top:27px;width:35px;height:15px;border-radius:0 0 4px 4px;border:1px solid rgba(230,215,215,.75);border-top:none;box-sizing:border-box;background:linear-gradient(180deg,#e0a79f 0,#cf6f62 45%,#b9281a 50%,#c5402c 100%);"></div>
<div class="t" style="left:551px;top:27px;font-size:12.500px;font-weight:bold;color:#fff;text-shadow:0 0 2px #4a120a,0 0 1px #4a120a;">x</div>
<div id="dbody" class="a"></div>

<!-- look-in row -->
<div class="t d" style="left:179px;top:57px;font-size:9.200px;">查找范围<span style="font-family:'Liberation Mono',monospace;font-size:7.500px;">(I)</span>:</div>
<div class="a" style="left:237px;top:54px;width:192px;height:17px;background:#fff;border:1px solid #c6cad0;box-sizing:border-box;"></div>
<svg class="a" style="left:240px;top:56px;" width="14" height="13" viewBox="0 0 14 13"><path d="M1.500 2.500 Q1.500 1.500 2.500 1.500 L5.500 1.500 L6.500 2.500 L11 2.500 Q12 2.500 12 3.500 L12 11.500 L1.500 11.500 Z" fill="#e8c758"/><path d="M1.500 4.500 L12 4.500 L12 11.500 L1.500 11.500 Z" fill="#f6e28a"/><path d="M7 2 L7 11.500 L12 11.500 L12 3 Z" fill="#f2d56a" opacity=".8"/><path d="M1.500 11.500h10.500" stroke="#c9a63c" stroke-width=".6"/></svg>
<div class="t d" style="left:256px;top:58px;">图片</div>
<div class="a" style="left:419px;top:62px;width:0;height:0;border-left:3px solid transparent;border-right:3px solid transparent;border-top:3px solid #111;"></div>
<!-- nav icons -->
<svg class="a" style="left:437px;top:54px;" width="80" height="17" viewBox="0 0 80 17">
 <circle cx="8.500" cy="9" r="5.300" fill="#55575b" stroke="#8a8c90" stroke-width="1.100"/><circle cx="8.500" cy="8" r="3.600" fill="#85878b" opacity=".55"/><path d="M6 9 L9.500 6.200 L9.500 8 L11.800 8 L11.800 10 L9.500 10 L9.500 11.800 Z" fill="#f4f4f4"/>
 <path d="M20.500 6.500 L24 6.500 L25 7.500 L29 7.500 L29 14 L20.500 14 Z" fill="#efd469" stroke="#c9a63c" stroke-width=".5"/><path d="M24.500 12.500 L24.500 8 L22.500 8 L26 3.500 L29.500 8 L27.500 8 L27.500 12.500 Z" fill="#3fae3a" stroke="#1f7a22" stroke-width=".5"/>
 <path d="M37.500 7 L41 7 L42 8 L47 8 L47 14 L37.500 14 Z" fill="#f1da78" stroke="#c9a63c" stroke-width=".5"/><path d="M37.500 14 L39.500 9.500 L48.500 9.500 L47 14 Z" fill="#f8ea9c" stroke="#c9a63c" stroke-width=".4"/><circle cx="46.500" cy="6" r="2" fill="#f08a2a"/><circle cx="46.500" cy="6" r=".8" fill="#fff2c0"/>
 <rect x="54.500" y="4.500" width="10" height="9.500" fill="#fff" stroke="#2b64ad" stroke-width="1"/><rect x="54.500" y="4.500" width="10" height="2.500" fill="#2f6fc0"/><rect x="56" y="8.200" width="2" height="2" fill="#5a88c8"/><rect x="59" y="8.200" width="2" height="2" fill="#5a88c8"/><rect x="62" y="8.200" width="1.500" height="2" fill="#5a88c8"/><rect x="56" y="11" width="2" height="2" fill="#5a88c8"/><rect x="59" y="11" width="2" height="2" fill="#5a88c8"/><rect x="62" y="11" width="1.500" height="2" fill="#5a88c8"/>
 <path d="M67.500 8 L72.500 8 L70 11 Z" fill="#111"/>
</svg>

<!-- places bar -->
<div class="a" style="left:166px;top:74px;width:68px;height:262px;background:#f3f3f3;"></div>
<!-- file list -->
<div class="a" style="left:237px;top:74px;width:331px;height:207px;background:#fff;border:1px solid #dcdfe3;box-sizing:border-box;"></div>
<div class="a" style="left:555px;top:75px;width:12px;height:205px;background:#f1f1f1;"></div>
<div class="a" style="left:556px;top:115px;width:11px;height:49px;border:1px solid #a0a4aa;border-radius:2px;box-sizing:border-box;background:linear-gradient(90deg,#f4f4f4 0,#e6e8ea 50%,#d6d8dc 100%);"></div>
<div class="a" style="left:559px;top:137px;width:5px;height:1px;background:#70747a;box-shadow:0 2px 0 #70747a,0 4px 0 #70747a;"></div>
<div class="a" style="left:558px;top:81px;width:0;height:0;border-left:3px solid transparent;border-right:3px solid transparent;border-bottom:3px solid #333;"></div>
<div class="a" style="left:558px;top:274px;width:0;height:0;border-left:3px solid transparent;border-right:3px solid transparent;border-top:3px solid #333;"></div>


<!-- places icons -->
<svg class="a" style="left:188px;top:76px;" width="26" height="24" viewBox="0 0 26 24">
 <path d="M3 17 L14 14 L24 18 L13 22.500 Z" fill="#c8ccd2" stroke="#8a9098" stroke-width=".6"/>
 <path d="M7 5 L19 3 L20 15 L8 16.500 Z" fill="#bcd8f0" stroke="#7a9cc0" stroke-width=".7"/>
 <path d="M9 9 L17 8 L17.500 14 L9.500 15 Z" fill="#4e8fd0"/><path d="M9 12 L13 10 L17.500 13 L17.500 14 L9.500 15 Z" fill="#6cba5a"/>
 <circle cx="7" cy="7" r="5" fill="#e8f0f8" stroke="#8aa4c4" stroke-width=".9"/><path d="M7 4 L7 7 L9.500 8.500" stroke="#4a6a94" stroke-width=".9" fill="none"/>
</svg>
<div class="lbl" style="left:167px;width:69px;top:103.500px;font-size:8.700px;">最近访问的位置</div>
<svg class="a" style="left:189px;top:123px;" width="24" height="21" viewBox="0 0 24 21">
 <rect x="1.500" y="1.500" width="21" height="17" rx="1" fill="#2a6fd0" stroke="#9ab4d4" stroke-width="1"/>
 <path d="M2 2 L22 2 L22 9 Q12 7 2 13 Z" fill="#5a9cf0" opacity=".75"/>
 <rect x="2" y="15.500" width="20" height="2.500" fill="#3a4a60"/><rect x="3" y="16" width="3" height="1.500" fill="#6ac060"/>
</svg>
<div class="lbl" style="left:167px;width:68px;top:148.500px;font-size:9px;">桌面</div>
<svg class="a" style="left:189px;top:169px;" width="25" height="23" viewBox="0 0 25 23">
 <path d="M1.500 3 Q1.500 2 2.500 2 L9 2 L10.500 3.500 L22 3.500 Q23 3.500 23 4.500 L23 20.500 L1.500 20.500 Z" fill="#e9c95c" stroke="#c4a040" stroke-width=".6"/>
 <path d="M1.500 6 L23 6 L23 20.500 L1.500 20.500 Z" fill="#f7e596"/>
 <circle cx="8" cy="4.300" r="1" fill="#d04a3a"/><circle cx="13" cy="4.800" r="1" fill="#4a9a4a"/><circle cx="18" cy="4.800" r="1" fill="#4a7ac8"/>
 <path d="M5 10 L20 10 L20 17 L5 17 Z" fill="#8cc4ec" stroke="#5a94c4" stroke-width=".6"/><path d="M7 17 L7 14 L18 14 L18 17 M5 17 L3 20 L22 20 L20 17" fill="#d8ecf8" stroke="#7aa8cc" stroke-width=".5"/>
</svg>
<div class="lbl" style="left:167px;width:68px;top:195px;font-size:9px;">库</div>
<svg class="a" style="left:188px;top:212px;" width="26" height="25" viewBox="0 0 26 25">
 <path d="M2 12 L7 10 L7 21 L2 22.500 Z" fill="#c4c8cc" stroke="#8a8e94" stroke-width=".5"/>
 <path d="M7 3 L22 1.500 L23 15 L8 16.500 Z" fill="#dfe6ee" stroke="#8a98aa" stroke-width=".7"/>
 <path d="M8.500 4.300 L21 3 L21.800 13.800 L9.300 15 Z" fill="#1f3fb4"/><path d="M8.500 4.300 L21 3 L21.300 8 Q14 8 9 12 Z" fill="#4a74e0" opacity=".8"/>
 <path d="M12 16.500 L18 16 L19 19.500 L11 20 Z" fill="#b8bec6"/><path d="M7 20.500 L20 19 L24 21.500 L10 23.500 Z" fill="#d4d8de" stroke="#9aa0a8" stroke-width=".5"/>
</svg>
<div class="lbl" style="left:167px;width:68px;top:240.500px;font-size:9px;">计算机</div>
<svg class="a" style="left:187px;top:257px;" width="27" height="26" viewBox="0 0 27 26">
 <circle cx="11" cy="11" r="9.500" fill="#2f7fd0" stroke="#2a5a94" stroke-width=".6"/>
 <path d="M4 6 Q8 2 12 3 Q14 6 10 8 Q8 12 5 11 Q3 9 4 6 Z" fill="#5cb84a"/><path d="M9 13 Q13 12 14 16 Q12 20 9 19 Q7 16 9 13 Z" fill="#5cb84a"/><path d="M15 4 Q19 6 19.500 10 Q17 9 15 6 Z" fill="#6cc45a"/>
 <path d="M12 9 L24 7.500 L25 18 L13 19.500 Z" fill="#dfe6ee" stroke="#8a98aa" stroke-width=".6"/><path d="M13.300 10.200 L23 9 L23.700 16.800 L14 18 Z" fill="#2044b8"/>
 <path d="M16 19.500 L21 19 L22 21.500 L15.500 22 Z" fill="#b8bec6"/><path d="M12 22.500 L23 21.200 L26 23 L14 24.800 Z" fill="#d4d8de" stroke="#9aa0a8" stroke-width=".4"/>
</svg>
<div class="lbl" style="left:167px;width:68px;top:285px;font-size:9px;">网络</div>

<!-- ===== thumbnails row 1 ===== -->
<div class="thumb" style="left:245px;top:82px;width:67px;height:66px;background:#fff;">
 <svg width="67" height="66" viewBox="0 0 67 66">
  <defs><clipPath id="mk"><circle cx="34.500" cy="37.500" r="24.400"/><circle cx="11.400" cy="14.200" r="10.200"/><circle cx="55.200" cy="13.800" r="10.200"/></clipPath>
  <linearGradient id="ear1" x1="0" y1="0" x2=".7" y2="1"><stop offset="0" stop-color="#6a6a6c"/><stop offset=".4" stop-color="#9c9a98"/><stop offset=".75" stop-color="#5a544e"/><stop offset="1" stop-color="#2e2822"/></linearGradient>
  <linearGradient id="ear2" x1="1" y1="0" x2="0" y2="1"><stop offset="0" stop-color="#3a2818"/><stop offset=".6" stop-color="#5c432e"/><stop offset="1" stop-color="#8a6c50"/></linearGradient>
  <linearGradient id="skin" x1="0" y1="0" x2="1" y2="1"><stop offset="0" stop-color="#b98c6a"/><stop offset=".5" stop-color="#cfa888"/><stop offset="1" stop-color="#a67c5c"/></linearGradient></defs>
  <g clip-path="url(#mk)">
   <rect x="0" y="0" width="67" height="66" fill="url(#skin)"/>
   <path d="M8 30 Q20 10 40 13 Q58 14 62 34 L62 22 L8 22 Z" fill="#6a5140"/>
   <path d="M9 30 Q12 20 26 16 L44 14 Q34 18 27 22 Q18 24 14 32 Z" fill="#5e4736"/>
   <rect x="0" y="0" width="22" height="26" fill="url(#ear1)"/>
   <rect x="44" y="0" width="23" height="25" fill="url(#ear2)"/>
   <path d="M23 24 Q34 18 44 24 L46 42 Q40 48 30 46 Q22 44 21 34 Z" fill="#d4d7db"/>
   <path d="M26 30 Q34 24 42 28 L42 40 Q34 44 27 40 Z" fill="#e6e8ea" opacity=".8"/>
   <path d="M44 22 L60 22 L60 50 Q52 58 44 56 Z" fill="#8e6c50"/>
   <path d="M44 30 Q50 28 52 34 Q48 44 44 44 Z" fill="#b48c6a" opacity=".8"/>
   <path d="M37 29 Q39.500 27.600 42 28.800 Q40 30.400 37 29 Z" fill="#46566a"/>
   <path d="M44 44 L60 44 L60 62 L44 62 Z" fill="#70523c" opacity=".7"/>
  </g>
  <path d="M22 0v66M43.800 0v66M0 21h67M0 42.800h67" stroke="#fff" stroke-width="1.300"/>
 </svg>
</div>
<div class="lbl" style="left:241px;width:74px;top:154px;">9.jpg</div>

<div class="thumb" style="left:322px;top:110px;width:66px;height:38px;">
 <svg width="66" height="38" viewBox="0 0 66 38">
  <defs><filter id="b1" x="-5%" y="-5%" width="110%" height="110%"><feGaussianBlur stdDeviation=".55"/></filter>
  <linearGradient id="s2" x1="0" y1="0" x2="0" y2="1"><stop offset="0" stop-color="#2458a8"/><stop offset=".45" stop-color="#5c90d0"/><stop offset=".5" stop-color="#2a2a1c"/><stop offset=".56" stop-color="#2f5c9c"/><stop offset=".8" stop-color="#2458a4"/><stop offset="1" stop-color="#183462"/></linearGradient></defs>
  <rect width="66" height="38" fill="url(#s2)"/>
  <g filter="url(#b1)">
   <path d="M0 4 L14 1 L30 0 L20 4 L36 3 L24 8 L10 9 L0 11 Z" fill="#eef2f8" opacity=".9"/>
   <path d="M38 6 L52 3 L48 7 L40 9 Z" fill="#dce8f6" opacity=".8"/>
   <path d="M0 12 L8 11 L16 13 L24 12.500 L26 19 L0 19 Z" fill="#4a4424"/>
   <path d="M4 14 L12 13 L20 15 L22 18 L4 18 Z" fill="#c07a28"/>
   <path d="M20 19 L29 10 L33 6 L36 9 L40 13 L46 19 Z" fill="#e08c1c"/>
   <path d="M20 19 L29 10 L33 6 L32 19 Z" fill="#b06c18"/>
   <path d="M44 19 L50 13 L58 12 L66 14 L66 19 Z" fill="#c8802c"/>
   <path d="M0 18.500 L66 18.500 L66 20.500 L0 20.500 Z" fill="#2a2416"/>
   <path d="M20 20.500 L46 20.500 L38 28 L33 33 L29 28 Z" fill="#c87a22" opacity=".9"/>
   <path d="M0 20.500 L22 20.500 L14 26 L0 27 Z" fill="#3a3a22" opacity=".85"/>
   <path d="M46 20.500 L66 20.500 L66 24 L54 24 Z" fill="#b87830" opacity=".8"/>
   <path d="M0 30 L20 28 L30 34 L10 38 L0 38 Z" fill="#dfe8f2" opacity=".55"/>
  </g>
 </svg>
</div>
<div class="lbl" style="left:318px;width:74px;top:154px;font-size:9.150px;">370ace8df5322...</div>

<div class="thumb" style="left:399px;top:106px;width:66px;height:41px;">
 <svg width="66" height="41" viewBox="0 0 66 41">
  <defs><filter id="b2" x="-5%" y="-5%" width="110%" height="110%"><feGaussianBlur stdDeviation="1.1"/></filter>
  <linearGradient id="s3" x1="0" y1="0" x2="0" y2="1"><stop offset="0" stop-color="#1c2648"/><stop offset=".26" stop-color="#3a3c60"/><stop offset=".33" stop-color="#2c3c9c"/><stop offset=".7" stop-color="#2434a0"/><stop offset="1" stop-color="#161e5c"/></linearGradient></defs>
  <rect width="66" height="41" fill="url(#s3)"/>
  <g filter="url(#b2)">
   <path d="M36 0 L66 0 L66 8 L50 6 L40 4 Z" fill="#5a3038" opacity=".9"/>
   <path d="M0 1 L20 3 L30 7 L14 8 L0 10 Z" fill="#465074" opacity=".9"/>
   <path d="M18 11 L28 8 L36 7 L46 9 L54 12 L36 13 Z" fill="#e08a3c"/>
   <path d="M26 11 L34 9.500 L42 11 L34 12.500 Z" fill="#fad090"/>
   <path d="M16 14 L52 14 L44 24 L42 41 L22 41 L26 26 Z" fill="#6878e0"/>
   <path d="M26 16 L44 16 L38 26 L36 41 L28 41 L31 26 Z" fill="#98a6f6" opacity=".85"/>
   <path d="M0 14 L14 16 L22 24 L14 30 L18 41 L0 41 Z" fill="#18204e"/>
   <path d="M66 14 L54 17 L46 25 L52 32 L46 41 L66 41 Z" fill="#18204e"/>
   <path d="M2 20 L14 21 L18 27 L6 27 Z" fill="#3444a0" opacity=".8"/>
   <path d="M50 22 L64 19 L64 28 L54 29 Z" fill="#3444a0" opacity=".8"/>
  </g>
  <rect width="66" height="41" fill="none" stroke="#0c1230" stroke-width="2" opacity=".5"/>
 </svg>
</div>
<div class="lbl" style="left:395px;width:76px;top:154px;font-size:8.900px;">1440x900_2d7e...</div>

<svg class="a" style="left:483px;top:82px;" width="52" height="66" viewBox="0 0 52 66">
 <defs><linearGradient id="pg" x1="0" y1="0" x2="1" y2="1"><stop offset="0" stop-color="#fafafa"/><stop offset="1" stop-color="#e9e9e9"/></linearGradient></defs>
 <path d="M3 3 Q3 2 4 2 L38 2 L50 14 L50 62 Q50 63 49 63 L4 63 Q3 63 3 62 Z" fill="url(#pg)" stroke="#c9c9c9" stroke-width="1"/>
 <path d="M38 2 L38 11 Q38 14 41 14 L50 14 Z" fill="#fff" stroke="#c4c4c4" stroke-width=".8"/>
 <path d="M4 64h45" stroke="#dcdcdc" stroke-width="1"/>
</svg>
<div class="lbl" style="left:471px;width:76px;top:154px;font-size:8.900px;">1440x900_2d7e...</div>

<!-- ===== thumbnails row 2 ===== -->
<div class="a" style="left:241px;top:187px;width:76px;height:94px;background:linear-gradient(180deg,#dcebfc 0,#cfe0f7 100%);border:1px solid #84acdd;border-bottom:none;border-radius:3px 3px 0 0;box-sizing:border-box;"></div>
<div class="thumb" style="left:245px;top:213px;width:66px;height:42px;">
 <svg width="66" height="42" viewBox="0 0 66 42">
  <defs><linearGradient id="s5" x1="0" y1="0" x2="0" y2="1"><stop offset="0" stop-color="#4a80b8"/><stop offset=".2" stop-color="#88a4b8"/><stop offset=".33" stop-color="#d8b078"/><stop offset=".37" stop-color="#6a86a4"/><stop offset=".6" stop-color="#8098b0"/><stop offset=".66" stop-color="#5a5a58"/><stop offset="1" stop-color="#4a4036"/></linearGradient>
  <radialGradient id="sun5" cx=".5" cy=".5" r=".5"><stop offset="0" stop-color="#fff6b0"/><stop offset=".25" stop-color="#f8c040"/><stop offset="1" stop-color="#f0a040" stop-opacity="0"/></radialGradient></defs>
  <rect width="66" height="42" fill="url(#s5)"/>
  <g filter="url(#b1)">
   <ellipse cx="37" cy="12" rx="24" ry="7" fill="url(#sun5)"/>
   <ellipse cx="37.500" cy="14" rx="4" ry="1.800" fill="#fff2a0"/>
   <path d="M10 12 L30 11.500 L24 13 L12 13.500 Z" fill="#6a5a58" opacity=".8"/>
   <path d="M44 12 L64 11 L66 13 L48 13.500 Z" fill="#6a5a58" opacity=".7"/>
   <path d="M0 12.500 L6 12 L11 15.500 L0 16 Z" fill="#2c3444"/>
   <path d="M30 16 L46 16 L42 19 L34 19 Z" fill="#e8c890" opacity=".7"/>
   <path d="M0 27 L10 25 L22 26 L34 23 L44 25 L54 24 L66 27 L66 42 L0 42 Z" fill="#5c5048"/>
   <path d="M0 29 L12 27 L26 27 L34 31 L28 38 L14 42 L0 42 Z" fill="#a8743c"/>
   <path d="M2 33 L18 30 L26 32 L16 38 L2 40 Z" fill="#bc8448" opacity=".9"/>
   <path d="M34 25 L48 26 L58 29 L66 30 L66 38 L52 36 L40 32 Z" fill="#3a3c44"/>
   <path d="M46 30 L56 31 L60 35 L50 35 Z" fill="#6a7280" opacity=".8"/>
   <path d="M28 42 L32 36 L42 33 L52 37 L60 42 Z" fill="#3f9a30"/>
   <path d="M58 42 L60 38 L66 37 L66 42 Z" fill="#3a8a2c"/>
  </g>
 </svg>
</div>
<div class="t" style="left:244px;top:263px;font-size:9.5px;color:#111;">39107284_14</div>
<div class="a" style="left:242px;top:274px;width:74px;height:7px;overflow:hidden;"><div class="t" style="left:2px;top:0;font-size:9.5px;color:#111;">54415923_m</div></div>

<div class="thumb" style="left:322px;top:219px;width:66px;height:36px;">
 <svg width="66" height="36" viewBox="0 0 66 36">
  <defs><linearGradient id="s6" x1="0" y1="0" x2="0" y2="1"><stop offset="0" stop-color="#3a7cd0"/><stop offset=".3" stop-color="#5a98dc"/><stop offset=".49" stop-color="#9cc8ec"/><stop offset=".51" stop-color="#2a8cb0"/><stop offset=".6" stop-color="#58c8c8"/><stop offset=".8" stop-color="#6cd4cc"/><stop offset="1" stop-color="#3aa4b0"/></linearGradient></defs>
  <rect width="66" height="36" fill="url(#s6)"/>
  <g filter="url(#b1)">
   <path d="M38 5 L50 3 L64 5 L66 9 L54 9 L44 8 Z" fill="#eaf2fa" opacity=".85"/>
   <path d="M0 6 L14 4 L30 7 L20 9 L0 10 Z" fill="#cfe0f4" opacity=".6"/>
   <path d="M26 12 L40 10 L46 12 L34 13 Z" fill="#d8e6f6" opacity=".6"/>
   <path d="M8 19.500 L30 18.500 L46 18.500 L58 19.500 L44 21 L20 21 Z" fill="#f2eedc"/>
   <path d="M20 18.500 L24 16 L30 14.800 L36 15 L41 16.200 L43 18.500 Z" fill="#2c6428"/>
   <path d="M24 17 L30 15.500 L36 16 L38 17.500 Z" fill="#4a8a34"/>
   <path d="M0 26 L16 24 L30 28 L14 32 L0 32 Z" fill="#3a9cac" opacity=".6"/>
   <path d="M36 28 L54 25 L66 28 L66 34 L46 33 Z" fill="#3a9cac" opacity=".55"/>
  </g>
 </svg>
</div>
<div class="lbl" style="left:380px;width:12px;top:263px;text-align:left;">0...</div>

<div class="thumb" style="left:399px;top:215px;width:66px;height:41px;">
 <svg width="66" height="41" viewBox="0 0 66 41">
  <defs><linearGradient id="s7" x1="0" y1="0" x2="0" y2="1"><stop offset="0" stop-color="#1c6cc8"/><stop offset=".12" stop-color="#4a90dc"/><stop offset=".3" stop-color="#8cb8e4"/><stop offset=".4" stop-color="#2c6cac"/><stop offset=".52" stop-color="#2a6498"/><stop offset=".58" stop-color="#3c7430"/><stop offset=".82" stop-color="#3a7a28"/><stop offset=".9" stop-color="#58a82c"/><stop offset="1" stop-color="#64b830"/></linearGradient></defs>
  <rect width="66" height="41" fill="url(#s7)"/>
  <g filter="url(#b1)">
   <path d="M0 5 L14 4 L28 6 L40 3 L56 2 L66 4 L66 12 L50 13 L34 15 L16 14 L0 13 Z" fill="#f4f8fc"/>
   <path d="M28 3 L44 1.500 L60 3 L46 6 Z" fill="#fff"/>
   <path d="M0 15 L66 13 L66 17 L0 18 Z" fill="#5a94d0" opacity=".8"/>
   <path d="M4 26 L10 22 L18 21 L24 19 L32 20 L28 23 L20 24 L12 27 Z" fill="#e8f0f8"/>
   <path d="M34 21 L42 18 L50 19 L56 17 L60 19 L54 22 L44 23 Z" fill="#e8f0f8"/>
   <path d="M0 24 L20 22 L40 25 L66 22 L66 26 L0 27 Z" fill="#2c6a94" opacity=".6"/>
   <path d="M26 26 L36 24 L40 27 L30 30 Z" fill="#8ab848" opacity=".8"/>
   <path d="M0 27 L16 26 L30 30 L50 27 L66 28 L66 35 L0 35 Z" fill="#3a7028" opacity=".8"/>
   <path d="M10 35 L12 31.500 L16 31 L18 35 Z" fill="#4a2c18"/>
   <path d="M26 32 L28 28.500 L32 28 L35 32 Z" fill="#5a3a20"/>
   <path d="M40 34 L66 32 L66 36 L44 36 Z" fill="#2c5a24" opacity=".8"/>
  </g>
 </svg>
</div>
<div class="lbl" style="left:396px;width:74px;top:263px;">ntk-1244-2676....</div>

<div class="thumb" style="left:483px;top:191px;width:51px;height:65px;">
 <svg width="51" height="65" viewBox="0 0 51 65">
  <defs><linearGradient id="sky4" x1="0" y1="0" x2="0" y2="1"><stop offset="0" stop-color="#f4f6f2"/><stop offset=".34" stop-color="#e6eae4"/><stop offset=".37" stop-color="#5a8838"/><stop offset=".46" stop-color="#6c9a4c"/><stop offset=".5" stop-color="#c0c4b8"/><stop offset=".75" stop-color="#b0b0a4"/><stop offset="1" stop-color="#a4a498"/></linearGradient></defs>
  <rect width="51" height="65" fill="url(#sky4)"/>
  <g filter="url(#b1)">
   <path d="M0 26 L18 24.500 L30 26 L51 23.500 L51 30 L34 31 L0 33 Z" fill="#4f8234"/>
   <path d="M0 30 L14 29 L20 32 L0 36 Z" fill="#7aa458" opacity=".8"/>
   <path d="M0 57 L10 54 L30 49 L51 44 L51 65 L0 65 Z" fill="#a08868"/>
   <path d="M2 65 L12 54 M12 65 L20 52 M22 65 L28 50 M32 65 L36 48 M42 65 L44 46" stroke="#6a563c" stroke-width=".9"/>
   <path d="M20 12 Q22 7.500 25.500 8 Q29 8.500 29.500 14 L30.500 24 L30 31 L19.500 31 L19 22 Z" fill="#201815"/>
   <path d="M18 20 L20 18 L20 30 L18.500 30 Z M30 19 L31.500 21 L31 30 L30 30 Z" fill="#b88c6c"/>
   <path d="M19 31 L30 31 L30.500 44 L28.500 57 L22 58 L17 52 L18 42 Z" fill="#d4801c"/>
   <path d="M22 33 L24 33 L23 56 Z" fill="#b4680e" opacity=".7"/>
   <path d="M23 58 L23 60 M27.500 57 L27.500 60" stroke="#c09878" stroke-width="1.300"/>
  </g>
 </svg>
</div>
<div class="lbl" style="left:472px;width:74px;top:263px;">timg (1).jpg</div>


<!-- file name / type rows -->
<div class="t d" style="left:239px;top:293px;font-size:9px;">文件名<span style="font-family:'Liberation Mono',monospace;font-size:7.500px;">(N)</span>:</div>
<div class="a" style="left:308px;top:289px;width:180px;height:15px;background:#fff;border:1px solid #a8acb4;box-sizing:border-box;"></div>
<div class="t" style="left:321.500px;top:293px;font-size:7.500px;color:#111;font-family:'Liberation Mono',monospace;">39107284_1454415923_mthumb.jpg</div>
<div class="a" style="left:478px;top:295px;width:0;height:0;border-left:3px solid transparent;border-right:3px solid transparent;border-top:3px solid #111;"></div>
<div class="t d" style="left:239px;top:311px;font-size:9px;">文件类型<span style="font-family:'Liberation Mono',monospace;font-size:7.500px;">(T)</span>:</div>
<div class="a" style="left:308px;top:309px;width:180px;height:15px;border:1px solid #70747a;border-radius:2px;box-sizing:border-box;background:linear-gradient(180deg,#f4f4f4 0,#ececec 48%,#dedede 52%,#d2d2d2 100%);"></div>
<div class="t d" style="left:311px;top:312px;font-size:8.700px;">全部可使用文件</div>
<div class="a" style="left:478px;top:315px;width:0;height:0;border-left:3px solid transparent;border-right:3px solid transparent;border-top:3px solid #111;"></div>
<!-- buttons -->
<div class="a" style="left:502px;top:289px;width:64px;height:15px;border:1px solid #3c7fb1;border-radius:2px;box-sizing:border-box;background:linear-gradient(180deg,#eef6fc 0,#dcecf8 48%,#c2dcf0 52%,#b4d4ec 100%);box-shadow:inset 0 0 0 1px #48d0f0;"></div>
<div class="t d" style="left:519px;top:292px;font-size:9px;">打开<span style="font-family:'Liberation Mono',monospace;font-size:7.500px;"> (O)</span></div>
<div class="a" style="left:502px;top:309px;width:64px;height:15px;border:1px solid #70747a;border-radius:2px;box-sizing:border-box;background:linear-gradient(180deg,#f6f6f6 0,#ececec 48%,#dedede 52%,#d0d0d0 100%);"></div>
<div class="t d" style="left:525px;top:312px;font-size:9px;">取消</div>

<!-- format section -->
<div class="t d" style="left:171px;top:348px;font-size:9px;">格式:</div>
<div class="t d" style="left:227px;top:349px;font-size:8.200px;">JPEG</div>
<div class="t d" style="left:171px;top:370px;font-size:9px;">导入为:</div>
<div class="a" style="left:224px;top:367px;width:110px;height:15px;border:1px solid #70747a;border-radius:2px;box-sizing:border-box;background:linear-gradient(180deg,#f4f4f4 0,#ececec 48%,#dedede 52%,#d2d2d2 100%);"></div>
<div class="t d" style="left:227px;top:370px;font-size:9px;">素材</div>
<div class="a" style="left:325px;top:373px;width:0;height:0;border-left:3px solid transparent;border-right:3px solid transparent;border-top:3px solid #111;"></div>
<div class="a" style="left:171px;top:390px;width:167px;height:1px;background:#a8a8a8;"></div>
<div class="a" style="left:171px;top:391px;width:167px;height:1px;background:#fff;"></div>
<div class="a" style="left:171px;top:408px;width:10px;height:10px;border:1px solid #8e8f8f;box-sizing:border-box;background:linear-gradient(135deg,#dcdcdc,#fafafa);"></div>
<div class="t d" style="left:183px;top:408px;font-size:9px;"><span style="font-size:8.200px;">JPEG</span> 序列</div>
<div class="a" style="left:182px;top:426px;width:10px;height:10px;border:1px solid #bcbcbc;box-sizing:border-box;background:#f6f6f6;"></div>
<div class="t" style="left:194px;top:426px;font-size:8.700px;color:#8a8a8a;">强制为拉丁字母顺序</div>
<div class="a" style="left:402px;top:438px;width:65px;height:14px;border:1px solid #b4b4b4;border-radius:2px;box-sizing:border-box;background:#f2f2f2;"></div>
<div class="t" style="left:412px;top:441px;font-size:9px;color:#8a8a8a;">导入文件夹</div>
<!-- resize grip -->
<svg class="a" style="left:562px;top:458px;" width="8" height="8" viewBox="0 0 8 8"><g fill="#b4b4b4"><rect x="6" y="0" width="1" height="1"/><rect x="4" y="2" width="1" height="1"/><rect x="6" y="2" width="1" height="1"/><rect x="2" y="4" width="1" height="1"/><rect x="4" y="4" width="1" height="1"/><rect x="6" y="4" width="1" height="1"/><rect x="0" y="6" width="1" height="1"/><rect x="2" y="6" width="1" height="1"/><rect x="4" y="6" width="1" height="1"/><rect x="6" y="6" width="1" height="1"/></g></svg>

<!-- cursor -->
<svg class="a" style="left:294px;top:243px;" width="12" height="18" viewBox="0 0 12 18"><path d="M1.500 1 L1.500 14 L4.500 11.200 L6.800 16.200 L8.800 15.300 L6.600 10.500 L10.500 10.500 Z" fill="#fff" stroke="#111" stroke-width=".9"/></svg>
<!-- tooltip -->
<div class="a" style="left:295px;top:256px;width:85px;height:52px;border:1px solid #767676;border-radius:3px;box-sizing:border-box;background:linear-gradient(180deg,#fff 0,#eceef6 100%);box-shadow:1px 2px 3px rgba(0,0,0,.3);"></div>
<div class="t" style="left:299px;top:259px;font-size:8.900px;color:#6a6a6a;">项目类型: JPG 文件</div>
<div class="t" style="left:299px;top:271px;font-size:8.900px;color:#6a6a6a;">分级: 未分级</div>
<div class="t" style="left:299px;top:284px;font-size:8.900px;color:#6a6a6a;">尺寸: 900 x 586</div>
<div class="t" style="left:299px;top:296px;font-size:8.900px;color:#6a6a6a;">大小: 185 KB</div>

</body>
</html>
